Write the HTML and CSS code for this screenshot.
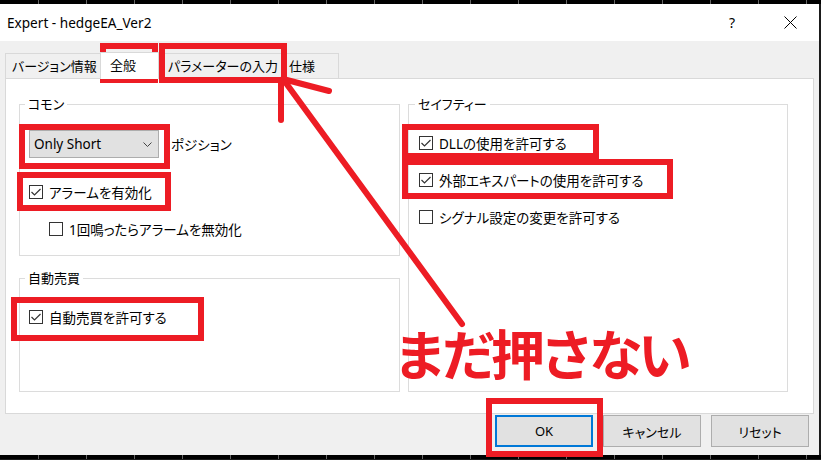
FILE: index.html
```html
<!DOCTYPE html>
<html lang="ja">
<head>
    <meta charset="UTF-8">
    <meta name="viewport" content="width=device-width, initial-scale=1.0">
    <title>Expert - hedgeEA_Ver2</title>
    <link rel="stylesheet" href="styles.css">
</head>
<body>
    <div class="desk"></div>

    <div class="dialog">
        <header class="titlebar">
            <span class="title">Expert - hedgeEA_Ver2</span>
            <span class="help">?</span>
            <svg class="close" width="13" height="13" viewBox="0 0 13 13">
                <path d="M0.5 0.5 L12.5 12.5 M12.5 0.5 L0.5 12.5" stroke="#000" stroke-width="1" fill="none"/>
            </svg>
        </header>

        <div class="client">
            <nav class="tabs">
                <div class="tab tab-version">バージョン情報</div>
                <div class="tab tab-general active">全般</div>
                <div class="tab tab-params">パラメーターの入力</div>
                <div class="tab tab-spec">仕様</div>
            </nav>

            <section class="panel">
                <div class="col">
                    <fieldset class="group group-common">
                        <legend>コモン</legend>
                        <div class="combo-row">
                            <div class="combo">
                                <span>Only Short</span>
                                <svg width="9" height="5" viewBox="0 0 9 5">
                                    <polyline points="0.5,0.5 4.5,4.5 8.5,0.5" stroke="#444" stroke-width="1" fill="none"/>
                                </svg>
                            </div>
                            <span class="combo-label">ポジション</span>
                        </div>
                        <label class="check first">
                            <span class="box checked"></span>アラームを有効化
                        </label>
                        <label class="check sub">
                            <span class="box"></span>1回鳴ったらアラームを無効化
                        </label>
                    </fieldset>

                    <fieldset class="group group-auto">
                        <legend>自動売買</legend>
                        <label class="check first">
                            <span class="box checked"></span>自動売買を許可する
                        </label>
                    </fieldset>
                </div>

                <fieldset class="group group-safety">
                    <legend>セイフティー</legend>
                    <label class="check first">
                        <span class="box checked"></span>DLLの使用を許可する
                    </label>
                    <label class="check">
                        <span class="box checked"></span>外部エキスパートの使用を許可する
                    </label>
                    <label class="check">
                        <span class="box"></span>シグナル設定の変更を許可する
                    </label>
                </fieldset>
            </section>

            <div class="buttons">
                <button class="btn btn-ok">OK</button>
                <button class="btn">キャンセル</button>
                <button class="btn">リセット</button>
            </div>
        </div>
    </div>

    <div class="desk"></div>

    <!-- red marks drawn over the screenshot -->
    <svg class="marks" width="821" height="460" viewBox="0 0 821 460">
        <g stroke="#ed1c24" stroke-width="6" fill="none">
            <rect x="103" y="46" width="52" height="34"/>
            <rect x="162" y="46" width="122" height="34"/>
            <rect x="22" y="127" width="145" height="39"/>
            <rect x="20" y="175" width="148" height="33"/>
            <rect x="14" y="300" width="187" height="38"/>
            <rect x="405" y="127" width="191" height="29"/>
            <rect x="405" y="162" width="265" height="34"/>
            <rect x="489" y="401" width="111" height="53"/>
        </g>
        <g stroke="#ed1c24" stroke-width="6" stroke-linecap="round" fill="none">
            <line x1="462" y1="324" x2="283" y2="79"/>
            <line x1="283" y1="79" x2="329" y2="91"/>
            <line x1="281" y1="81" x2="281" y2="120"/>
        </g>
    </svg>
    <div class="note">まだ押さない</div>
</body>
</html>
```

FILE: styles.css
```css
:root{
    --face:#f0f0f0;
    --line:#d9d9d9;
    --btn:#e1e1e1;
    --btn-line:#adadad;
    --focus:#0078d7;
    --red:#ed1c24;
}

*{
    box-sizing: border-box;
    margin: 0;
}

body{
    position: relative;
    width: 821px;
    height: 460px;
    overflow: hidden;
    background: #1b1b1b;
    color: #000;
    font-family: "Noto Sans", "Noto Sans CJK JP", sans-serif;
    font-size: 13.5px;
    font-feature-settings: "palt";
}

/* chart strips above and below the dialog */
.desk{
    height: 4px;
    background: #000 repeating-linear-gradient(to right, transparent 0 38px, #666 38px 39px, transparent 39px 48px);
}
.desk:last-of-type{
    height: 5px;
}

.dialog{
    width: 819px;
    background: var(--face);
}

.titlebar{
    display: flex;
    align-items: center;
    height: 37px;
    padding: 0 22px 0 7px;
    background: #fff;
}
.title{
    flex: 1 1 0%;
    font-size: 13.6px;
}
.help{
    font-size: 14px;
    margin-right: 49px;
}

.client{
    height: 414px;
    padding-top: 12px;
}

/* tabs */
.tabs{
    display: flex;
    align-items: flex-end;
    height: 25px;
    padding-left: 5px;
    font-size: 13px;
}
.tab{
    height: 25px;
    line-height: 24px;
    border: 1px solid var(--line);
    border-bottom: none;
    margin-right: -1px;
    white-space: nowrap;
}
.tab.active{
    position: relative;
    z-index: 1;
    height: 27px;
    margin-bottom: -1px;
    background: #fff;
}
.tab-version{ width: 96px; padding-left: 6px; }
.tab-general{ width: 59px; padding-left: 9px; }
.tab-params{ width: 127px; padding-left: 9px; }
.tab-spec{ width: 55px; padding-left: 4px; }

/* panel */
.panel{
    display: flex;
    gap: 8px;
    width: 809px;
    height: 336px;
    margin-left: 5px;
    padding: 17px 0 0 13px;
    background: #fff;
    border: 1px solid var(--line);
}
.col{
    display: flex;
    flex-direction: column;
    gap: 14px;
    width: 381px;
}

.group{
    min-width: 0;
    margin: 0;
    padding: 0 0 0 9px;
    border: 1px solid #dcdcdc;
}
.group legend{
    margin-left: -4px;
    padding: 0 3px;
    line-height: 16px;
    font-size: 13px;
}
.group-common{ height: 160px; }
.group-auto{ height: 122px; }
.group-safety{
    width: 380px;
    height: 296px;
    padding-left: 10px;
}

.combo-row{
    display: flex;
    align-items: center;
    gap: 12px;
    margin-top: 18px;
}
.combo{
    display: flex;
    align-items: center;
    justify-content: space-between;
    width: 130px;
    height: 28px;
    padding: 0 6px 0 4px;
    background: var(--btn);
    border: 1px solid var(--btn-line);
}

.check{
    display: flex;
    align-items: center;
    gap: 6px;
    height: 20px;
    margin-top: 17px;
}
.group-common .check.first{ margin-top: 24px; }
.check.first{ margin-top: 21px; }
.check.sub{ margin-left: 20px; }

.box{
    flex: none;
    width: 14px;
    height: 14px;
    border: 1px solid #333;
    background: #fff;
}
.box.checked{
    background: #fff url("data:image/svg+xml,%3Csvg xmlns='http://www.w3.org/2000/svg' width='12' height='12' viewBox='0 0 12 12'%3E%3Cpolyline points='1.5,6 4.5,9 10.5,3' stroke='%23333' stroke-width='1.2' fill='none'/%3E%3C/svg%3E") center no-repeat;
}

/* dialog buttons */
.buttons{
    display: flex;
    justify-content: flex-end;
    gap: 10px;
    margin-top: 1px;
    padding-right: 10px;
}
.btn{
    width: 98px;
    height: 32px;
    background: var(--btn);
    border: 1px solid var(--btn-line);
    font: inherit;
    font-size: 13px;
    color: #000;
}
.btn-ok{
    border: 2px solid var(--focus);
}

/* annotations */
.marks{
    position: absolute;
    top: 0;
    left: 0;
    pointer-events: none;
}
.note{
    position: absolute;
    left: 393px;
    top: 326px;
    color: var(--red);
    font-family: "Noto Sans CJK JP", sans-serif;
    font-feature-settings: normal;
    font-size: 54px;
    font-weight: 700;
    letter-spacing: -5px;
    line-height: 1;
    white-space: nowrap;
}
```
